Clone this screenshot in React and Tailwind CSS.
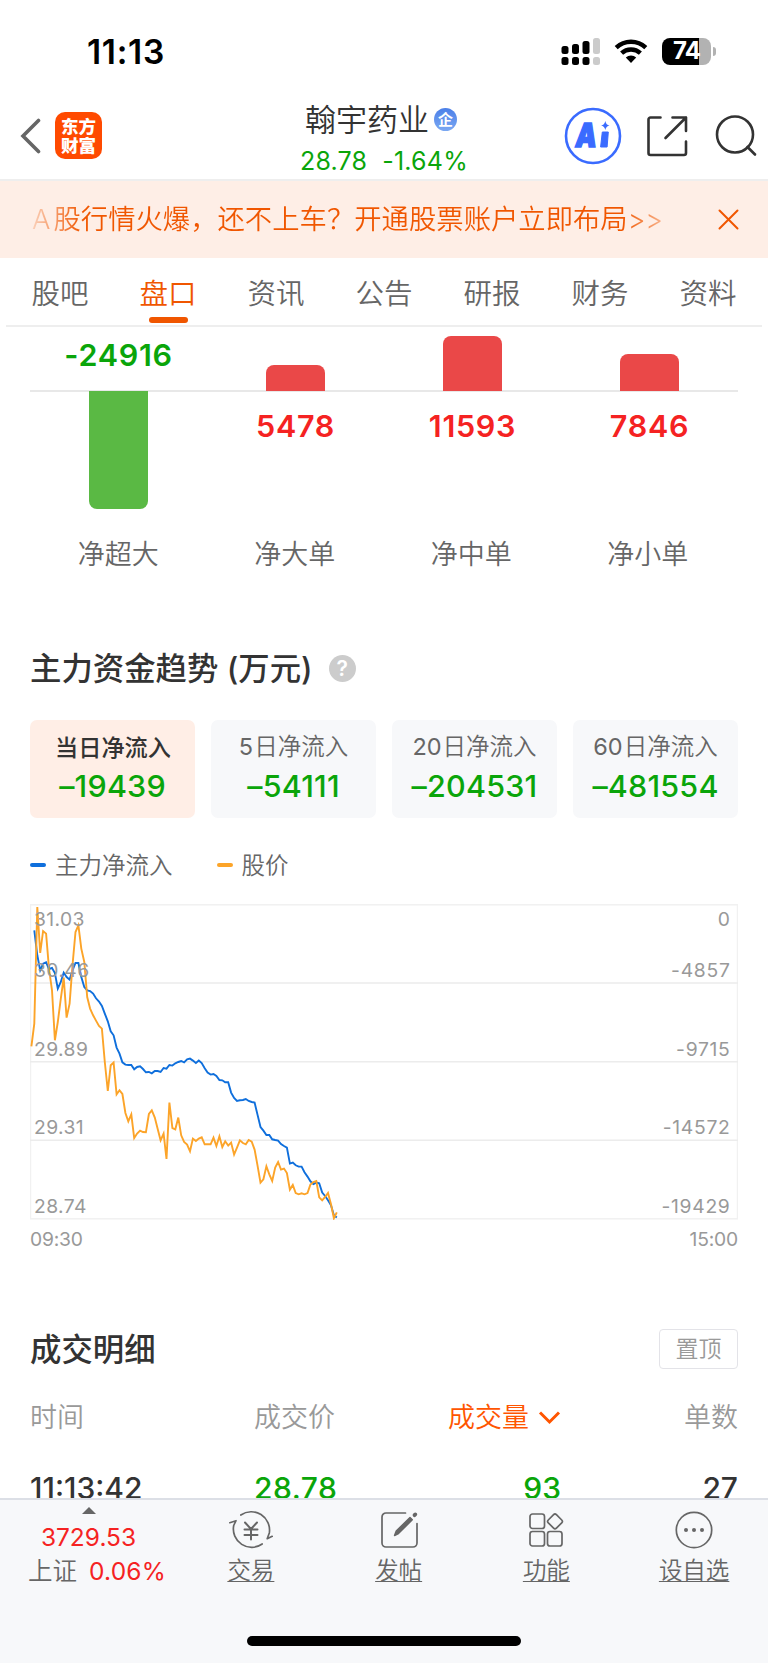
const tabs = ["股吧", "盘口", "资讯", "公告", "研报", "财务", "资料"];

const orders = [
  { label: "净超大", value: -24916, height: 118 },
  { label: "净大单", value: 5478, height: 26 },
  { label: "净中单", value: 11593, height: 55 },
  { label: "净小单", value: 7846, height: 37 },
];

const flows = [
  { days: "", label: "当日净流入", value: "–19439" },
  { days: "5", label: "日净流入", value: "–54111" },
  { days: "20", label: "日净流入", value: "–204531" },
  { days: "60", label: "日净流入", value: "–481554" },
];

// one value per minute from 09:30, in thirds of a pixel from the top
const price = [
  426, 358, 8, 146, 80, 88, 193, 258, 408, 353, 283, 220, 340, 298, 183, 83, 63, 133, 173, 278,
  313, 333, 349, 365, 373, 473, 560, 483, 475, 570, 558, 569, 626, 651, 630, 701, 688, 679, 683, 684,
  629, 618, 640, 674, 708, 688, 764, 595, 671, 675, 640, 693, 713, 721, 741, 703, 710, 703, 699, 720,
  720, 720, 700, 725, 696, 728, 711, 724, 715, 751, 730, 708, 716, 720, 707, 712, 736, 783, 835, 825,
  786, 810, 830, 790, 773, 796, 793, 806, 856, 842, 866, 870, 867, 870, 866, 841, 833, 830, 879, 888,
  878, 866, 900, 942, 924,
];

const inflow = [
  78, 153, 198, 178, 174, 194, 191, 206, 253, 233, 205, 218, 226, 198, 176, 176, 218, 248, 258, 260,
  268, 282, 292, 305, 328, 351, 381, 393, 430, 448, 474, 481, 482, 482, 495, 488, 486, 494, 504, 503,
  507, 500, 500, 503, 491, 493, 482, 484, 477, 473, 470, 474, 465, 463, 469, 476, 469, 476, 492, 505,
  511, 509, 515, 527, 528, 534, 534, 565, 581, 590, 588, 587, 584, 590, 593, 595, 631, 668, 679, 692,
  692, 705, 707, 709, 719, 725, 730, 778, 775, 783, 787, 787, 804, 817, 831, 839, 835, 837, 865, 875,
  888, 903, 933, 940,
];

const axis = [
  { y: 21.7, left: "31.03", right: "0" },
  { y: 73, left: "30.46", right: "-4857" },
  { y: 151.7, left: "29.89", right: "-9715" },
  { y: 230.3, left: "29.31", right: "-14572" },
  { y: 308.7, left: "28.74", right: "-19429" },
];

const toPoints = (values, start) =>
  values.map((v, i) => `${(1.4 + (i + start) * 2.937).toFixed(1)},${(v / 3 + 0.3).toFixed(1)}`).join(" ");

function StatusBar() {
  return (
    <div className="flex h-[102px] shrink-0 items-center pl-[87px] pr-[52px]">
      <span className="pt-px text-[33.5px] font-semibold leading-10 tracking-[0.7px] text-black">11:13</span>
      <svg className="ml-auto" width="39" height="28" viewBox="0 0 39 28">
        <g fill="#000">
          <rect x="0.5" y="9" width="7" height="8" rx="2.5" />
          <rect x="11" y="7" width="7" height="10" rx="2.5" />
          <rect x="21.5" y="4" width="7" height="13" rx="2.5" />
          <rect x="0.5" y="20" width="7" height="8" rx="2.5" />
          <rect x="11" y="20" width="7" height="8" rx="2.5" />
          <rect x="21.5" y="20" width="7" height="8" rx="2.5" />
        </g>
        <rect x="32" y="1" width="7" height="16" rx="2.5" fill="#cbcbcb" />
        <rect x="32" y="20" width="7" height="8" rx="2.5" fill="#cbcbcb" />
      </svg>
      <svg className="ml-[14px]" width="34" height="26" viewBox="0 0 34 26" fill="none" stroke="#000">
        <path d="M2.2 9.6a21.5 21.5 0 0 1 29.6 0" strokeWidth="4.4" />
        <path d="M7.6 15.2a13.8 13.8 0 0 1 18.8 0" strokeWidth="4.4" />
        <path d="M17 25l-5.2-5.4a7.6 7.6 0 0 1 10.4 0z" fill="#000" stroke="none" />
      </svg>
      <div className="ml-[14px] flex h-[27px] w-[49px] items-center justify-center rounded-[8px] bg-[linear-gradient(90deg,#000_75%,#b2b2b2_75%)]">
        <span className="text-[24px] font-bold leading-6 tracking-[-1px] text-white">74</span>
      </div>
      <span className="ml-[2px] h-[9px] w-[3px] rounded-r-full bg-[#b2b2b2]" />
    </div>
  );
}

function Header() {
  return (
    <header className="flex h-[79px] shrink-0 items-start border-b-2 border-[#eee]">
      <svg className="ml-[20px] mt-[16px]" width="22" height="36" viewBox="0 0 22 36">
        <path d="M18.5 2.5L3 18l15.5 15.5" fill="none" stroke="#666" strokeWidth="3.6" strokeLinecap="round" />
      </svg>
      <div className="ml-[13px] mt-[10px] flex h-[47px] w-[47px] flex-col items-center justify-center rounded-[10px] bg-[#ff4a00] text-[17.5px] font-black leading-[19px] text-white">
        <span>东方</span>
        <span>财富</span>
      </div>
      <div className="ml-[180px] w-[206px]">
        <div className="flex h-[35px] items-center pl-[23px]">
          <span className="text-[31px] font-[350] leading-[35px] text-[#333]">翰宇药业</span>
          <span className="ml-[5px] flex h-[23px] w-[23px] items-center justify-center rounded-full bg-linear-to-b from-[#4b7fe8] to-[#7ba8f2] text-[15px] font-bold leading-none text-white">
            企
          </span>
        </div>
        <div className="mt-[7px] flex gap-[15px] pl-[18px] text-[25px] leading-[34px] tracking-[0.2px] text-[#0aa50a]">
          <span>28.78</span>
          <span>-1.64%</span>
        </div>
      </div>
      <div className="ml-auto flex pr-[10px]">
        <svg className="mt-[5px]" width="58" height="58" viewBox="0 0 58 58">
          <circle cx="29" cy="29" r="27" fill="none" stroke="#3a6bff" strokeWidth="2.6" />
          <text x="17.5" y="40" fontSize="33" fontWeight="900" fill="#3a6bff" stroke="#3a6bff" strokeWidth="1.6" transform="skewX(-7) translate(-2 0)" textLength="21" lengthAdjust="spacingAndGlyphs">
            A
          </text>
          <path d="M38.3 25h6l-1.2 15h-6.5z" fill="#3a6bff" stroke="#3a6bff" strokeLinejoin="round" />
          <path d="M41.3 14q.8 4 4.2 4.5q-3.4.8-4.2 4.5q-.8-3.7-4.2-4.5q3.4-.5 4.2-4.5z" fill="#3a6bff" />
        </svg>
        <svg className="ml-[24px] mt-[13px]" width="42" height="42" viewBox="0 0 42 42" fill="none" stroke="#333" strokeWidth="2.6" strokeLinecap="round" strokeLinejoin="round">
          <path d="M14.5 2.5H4.5a2 2 0 0 0-2 2v33.500a2 2 0 0 0 2 2H38a2 2 0 0 0 2-2V26.5" />
          <path d="M26.5 2.5H40V16M40 2.5L19.5 23" />
        </svg>
        <svg className="ml-[26px] mt-[12px]" width="44" height="44" viewBox="0 0 44 44" fill="none" stroke="#333" strokeWidth="2.6" strokeLinecap="round">
          <circle cx="21" cy="20.5" r="18" />
          <path d="M33.5 33l7.5 7.5" />
        </svg>
      </div>
    </header>
  );
}

function Banner() {
  return (
    <div className="flex h-[77px] shrink-0 items-center bg-[#feeee6] pl-[32px] pr-[29px]">
      <p className="whitespace-nowrap bg-[linear-gradient(90deg,#f0560030_0,#f05600_50px,#f05600_590px,#f0560060_632px)] bg-clip-text pt-px text-[27.3px] font-[350] leading-10 tracking-[0.05px] text-transparent">
        <span className="mr-[3px]">A</span>股行情火爆，还不上车？开通股票账户立即布局
        <span className="tracking-[-0.3px]">&gt;&gt;</span>
      </p>
      <svg className="ml-auto" width="21" height="21" viewBox="0 0 21 21">
        <path d="M1.5 1.5l18 18m0-18l-18 18" stroke="#f05600" strokeWidth="2" strokeLinecap="round" />
      </svg>
    </div>
  );
}

function Tabs() {
  return (
    <nav className="mx-[6px] grid h-[69px] shrink-0 grid-cols-7 border-b-2 border-[#eee]">
      {tabs.map((tab) => (
        <div key={tab} className="flex flex-col items-center pt-[14px] font-[350]">
          <span className={tab === "盘口" ? "text-[28.5px] leading-[44px] text-[#f05600]" : "text-[28.5px] leading-[44px] text-[#666]"}>
            {tab}
          </span>
          {tab === "盘口" && <span className="mt-px h-[6px] w-[39px] rounded-full bg-[#f05600]" />}
        </div>
      ))}
    </nav>
  );
}

function OrderBars() {
  return (
    <section className="text-[30.5px] font-semibold tracking-[0.7px]">
      <div className="grid h-[65px] grid-cols-4 border-b-2 border-[#e8e8e8]">
        {orders.map((o) => (
          <div key={o.label} className="flex items-end justify-center">
            {o.value < 0 ? (
              <span className="mb-[17px] leading-[36px] text-[#0aa50a]">{o.value}</span>
            ) : (
              <div className="-mb-px w-[59px] rounded-t-[8px] bg-[#ea4848]" style={{ height: o.height }} />
            )}
          </div>
        ))}
      </div>
      <div className="grid h-[140px] grid-cols-4">
        {orders.map((o) => (
          <div key={o.label} className="flex items-start justify-center">
            {o.value < 0 ? (
              <div className="-mt-px w-[59px] rounded-b-[8px] bg-[#5ab944]" style={{ height: o.height }} />
            ) : (
              <span className="mt-[16px] leading-[36px] text-[#f52222]">{o.value}</span>
            )}
          </div>
        ))}
      </div>
      <div className="grid grid-cols-4 pt-px pr-[2px] text-center text-[27px] font-[350] leading-[44px] tracking-normal text-[#666]">
        {orders.map((o) => (
          <span key={o.label}>{o.label}</span>
        ))}
      </div>
    </section>
  );
}

function TrendChart() {
  return (
    <svg className="mt-[25px] block" width="708" height="316" viewBox="0 0 708 316">
      <g fill="none" stroke="#ececec" strokeWidth="1.5">
        <rect x="0.5" y="0.8" width="707" height="314" stroke="#f1f1f1" />
        <path d="M0 79h708M0 157.7h708M0 236.3h708" />
      </g>
      <polyline points={toPoints(inflow, 1)} fill="none" stroke="#0f6fdc" strokeWidth="1.9" />
      <polyline points={toPoints(price, 0)} fill="none" stroke="#fca429" strokeWidth="1.9" />
      <g fontSize="19.3" fill="#999">
        {axis.map((a) => (
          <text key={a.left} x="4" y={a.y} letterSpacing="0.4">{a.left}</text>
        ))}
        {axis.map((a) => (
          <text key={a.right} x="700.5" y={a.y} textAnchor="end" letterSpacing="0.7">{a.right}</text>
        ))}
      </g>
    </svg>
  );
}

function MoneyTrend() {
  return (
    <section className="mt-[70px]">
      <div className="flex h-[43px] items-center">
        <h2 className="whitespace-pre pt-[2px] text-[31.4px] font-medium leading-[43px] text-[#333]">主力资金趋势 (万元)</h2>
        <span className="ml-[16px] flex h-[27px] w-[27px] items-center justify-center rounded-full bg-[#ccc] text-[21px] font-semibold leading-none text-white">
          ?
        </span>
      </div>

      <div className="mt-[30px] grid grid-cols-4 gap-[16px]">
        {flows.map((f, i) => (
          <div
            key={f.value}
            className={
              i === 0
                ? "flex h-[98px] flex-col items-center rounded-[7px] bg-[#ffeee6] pt-[12px]"
                : "flex h-[98px] flex-col items-center rounded-[7px] bg-[#f7f8fa] pt-[12px]"
            }
          >
            <span
              className={
                i === 0
                  ? "mt-px mb-[-1px] text-[23.2px] font-medium leading-[30px] text-[#333]"
                  : "text-[23.5px] font-[350] leading-[30px] text-[#666]"
              }
            >
              <span className="mr-px font-normal">{f.days}</span>
              {f.label}
            </span>
            <span className="mt-[5px] text-[30.5px] font-medium leading-[38px] tracking-[0.2px] text-[#0aa50a]">{f.value}</span>
          </div>
        ))}
      </div>

      <div className="mt-[33px] flex h-[28px] items-center text-[23.5px] font-[350] leading-[28px] text-[#666]">
        <span className="mr-[9px] h-[4px] w-[16px] rounded-full bg-[#0f6fdc]" />
        <span className="pt-[2px]">主力净流入</span>
        <span className="ml-[44px] mr-[9px] h-[4px] w-[16px] rounded-full bg-[#fca429]" />
        <span className="pt-[2px]">股价</span>
      </div>

      <TrendChart />
      <div className="mt-[6px] flex justify-between text-[19.3px] leading-[27px] tracking-[-0.2px] text-[#999]">
        <span>09:30</span>
        <span>15:00</span>
      </div>
    </section>
  );
}

function Trades() {
  return (
    <section className="mt-[76px]">
      <div className="flex h-[40px] items-center justify-between">
        <h2 className="pt-[2px] text-[31.4px] font-medium leading-[40px] text-[#333]">成交明细</h2>
        <button className="h-[40px] w-[79px] rounded-[4px] border-[1.5px] border-[#e3e3e8] text-[23px] font-[350] leading-[39px] text-[#999]">
          置顶
        </button>
      </div>
      <div className="mt-[29px] grid h-[40px] grid-cols-[224px_157px_150px_177px] text-[27px] font-[350] leading-[40px] text-[#999]">
        <span>时间</span>
        <span>成交价</span>
        <span className="flex items-center justify-end text-[#ff5500]">
          成交量
          <svg className="ml-[9px] -mt-[2px]" width="23" height="15" viewBox="0 0 23 15">
            <path d="M2 2.5l9.5 9.5L21 2.5" fill="none" stroke="#ff5500" strokeWidth="3" />
          </svg>
        </span>
        <span className="text-right">单数</span>
      </div>
      <div className="mt-[30px] grid h-[40px] grid-cols-[224px_157px_150px_177px] text-[30px] font-medium leading-[40px] text-[#333]">
        <span>11:13:42</span>
        <span className="tracking-[0.5px] text-[#0aa50a]">28.78</span>
        <span className="text-right text-[#0aa50a]">93</span>
        <span className="text-right">27</span>
      </div>
    </section>
  );
}

function FooterItem({ label, children }) {
  return (
    <div className="flex flex-col items-center pt-[8px]">
      <svg width="44" height="44" viewBox="0 0 44 44" fill="none" stroke="#666" strokeWidth="1.7" strokeLinecap="round" strokeLinejoin="round">
        {children}
      </svg>
      <span className="mt-[3px] text-[23.5px] font-[350] leading-[32px] underline decoration-1 underline-offset-[2px]">{label}</span>
    </div>
  );
}

function Footer() {
  return (
    <footer className="flex h-[165px] shrink-0 flex-col border-t-2 border-[#dcdfe6] bg-[#f7f8fa] text-[#666]">
      <div className="grid flex-1 grid-cols-[177px_repeat(4,1fr)]">
        <div className="flex flex-col items-center pt-[7px]">
          <svg width="14" height="7" viewBox="0 0 14 7">
            <path d="M0 7L7 0l7 7z" fill="#666" />
          </svg>
          <span className="mt-[6px] text-[24.5px] leading-[34px] text-[#f52222]">3729.53</span>
          <div className="flex items-center gap-[12px] pl-[17px] text-[24.5px] leading-[34px]">
            <span className="font-[350]">上证</span>
            <span className="tracking-[0.2px] text-[#f52222]">0.06%</span>
          </div>
        </div>
        <FooterItem label="交易">
          <path d="M11.8 7A18.3 18.3 0 0 1 40.3 25L38.2 30.7L43.2 28.3" />
          <path d="M33.2 36A18.3 18.3 0 0 1 4.7 17.500L7 12.7L.8 14.7" />
          <path d="M16 14.5l6 6.5l6-6.5M15.5 21.5h13M15.5 27h13M22 21v10.5" strokeWidth="2" />
        </FooterItem>
        <FooterItem label="发帖">
          <path d="M28.5 5H9a4 4 0 0 0-4 4v26a4 4 0 0 0 4 4h27a4 4 0 0 0 4-4V15.5" />
          <path d="M17.5 27.5l1.7-4.5L33 9.5l2.3 2.3L21.5 25.5z" fill="#666" strokeWidth="1.4" />
          <path d="M37.5 7.2l.8-.8" strokeWidth="3.8" />
        </FooterItem>
        <FooterItem label="功能">
          <rect x="6" y="6" width="14.5" height="14.5" rx="2.5" />
          <rect x="6" y="23.5" width="14.5" height="14.5" rx="2.5" />
          <rect x="23.5" y="23.5" width="14.5" height="14.5" rx="2.5" />
          <rect x="25.2" y="7.7" width="11.5" height="11.5" rx="2" transform="rotate(45 31 13.5)" />
        </FooterItem>
        <FooterItem label="设自选">
          <circle cx="22" cy="22" r="17.7" />
          <g fill="#666" stroke="none">
            <circle cx="14" cy="22" r="2" />
            <circle cx="22" cy="22" r="2" />
            <circle cx="30" cy="22" r="2" />
          </g>
        </FooterItem>
      </div>
      <div className="mb-[17px] h-[10px] w-[274px] self-center rounded-full bg-black" />
    </footer>
  );
}

export default function App() {
  return (
    <div className="flex h-[1663px] w-[768px] flex-col overflow-hidden bg-white font-['Inter','Noto_Sans_CJK_SC',sans-serif]">
      <StatusBar />
      <Header />
      <Banner />
      <Tabs />
      <main className="min-h-0 flex-1 overflow-hidden px-[30px]">
        <OrderBars />
        <MoneyTrend />
        <Trades />
      </main>
      <Footer />
    </div>
  );
}
